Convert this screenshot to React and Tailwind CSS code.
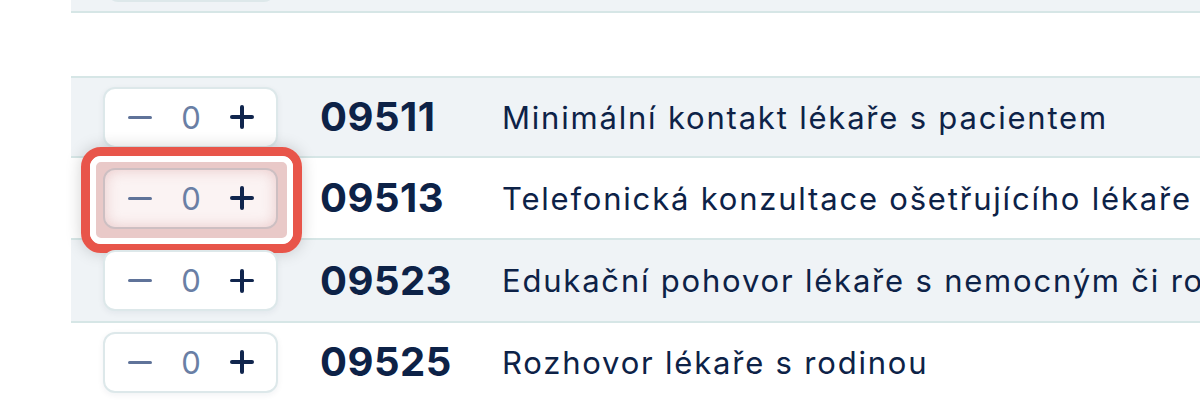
import React from "react";

const font = { fontFamily: "Inter, 'Noto Sans', sans-serif" };

function Stepper({ active }) {
  return (
    <div
      className={
        "flex h-[61px] w-[175px] shrink-0 items-center rounded-[12px] border-2 " +
        (active
          ? "border-[#cdbfc2] bg-[#fbf3f3] shadow-[inset_0_0_14px_rgba(214,150,150,0.45)]"
          : "border-[#dde8ea] bg-white shadow-[0_2px_6px_rgba(20,40,70,0.06)]")
      }
    >
      <div className="ml-[23px] h-[3px] w-[24px] rounded-full bg-[#5f7399]" />
      <div className="ml-[28px] w-[22px] text-center text-[31px] leading-none text-[#6a7fa5]">0</div>
      <div className="relative ml-[28px] h-[24px] w-[24px]">
        <div className="absolute left-0 top-[10px] h-[3.5px] w-[24px] rounded-full bg-[#10254d]" />
        <div className="absolute left-[10px] top-0 h-[24px] w-[3.5px] rounded-full bg-[#10254d]" />
      </div>
    </div>
  );
}

function Row({ code, text, gray, active, h }) {
  return (
    <div
      className={
        "flex items-center border-b-2 border-[#d6e6e6] " +
        (gray ? "bg-[#eff3f6] " : "bg-white ") +
        h
      }
    >
      <div className="relative ml-[32px] flex items-center">
        {active && (
          <div className="pointer-events-none absolute left-[-22px] top-[-21px] h-[106px] w-[221px] rounded-[20px] border-[9px] border-[#e8554a] shadow-[0_0_16px_rgba(0,0,0,0.18)]">
            <div className="h-full w-full rounded-[11px] border-[6px] border-white bg-[#e9c9c8]" />
          </div>
        )}
        <div className="relative">
          <Stepper active={active} />
        </div>
      </div>
      <div className="ml-[42px] w-[182px] shrink-0 text-[40px] font-bold leading-none tracking-[0.5px] text-[#0d2247]">{code}</div>
      <div className="whitespace-nowrap text-[31px] leading-none tracking-[1.8px] text-[#0d2247]">{text}</div>
    </div>
  );
}

export default function App() {
  return (
    <div className="h-[400px] w-[1200px] overflow-hidden bg-white" style={font}>
      <div className="ml-[71px]">
        <div className="relative h-[13px] border-b-2 border-[#d6e6e6] bg-[#eff3f6]">
          <div className="absolute left-[36px] top-[-20px] h-[22px] w-[168px] rounded-[12px] border-2 border-[#dde8ea] bg-white" />
        </div>
        <div className="h-[65px] border-b-2 border-[#d6e6e6] bg-white" />
        <Row code="09511" text="Minimální kontakt lékaře s pacientem" gray h="h-[80px]" />
        <Row code="09513" text="Telefonická konzultace ošetřujícího lékaře pacientem" active h="h-[82px]" />
        <Row code="09523" text="Edukační pohovor lékaře s nemocným či rodinou" gray h="h-[83px]" />
        <Row code="09525" text="Rozhovor lékaře s rodinou" h="h-[80px]" />
      </div>
    </div>
  );
}
